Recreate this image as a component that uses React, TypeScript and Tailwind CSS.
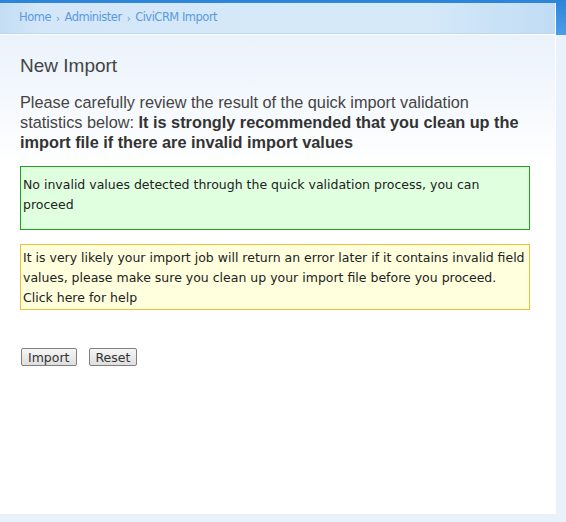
import React from "react";

export default function App() {
  return (
    <div className="w-[566px] h-[522px] overflow-hidden bg-[linear-gradient(to_bottom,#2c84d8_0px,#4b9de8_35px,#e9f1fa_35px,#e9f1fa_100%)] font-['DejaVu_Sans',sans-serif]">
      <div className="mt-[3px] w-[556px] h-[511px] border-r border-white flex flex-col bg-white">
        <div className="h-[31px] shrink-0 flex items-center pl-[19px] text-[11.5px] tracking-[-0.5px] text-[#5a9ae2] bg-[linear-gradient(to_right,#c3ddf4_0px,#d3e7f8_40px,#d6e9f9_420px,#c0dcf4_555px)] border-b border-[#bcd7ef]">
          <span>Home</span>
          <span className="mx-[5px] text-[10px]">›</span>
          <span>Administer</span>
          <span className="mx-[5px] text-[10px]">›</span>
          <span>CiviCRM Import</span>
        </div>
        <div className="flex-1 px-[20px] bg-[linear-gradient(to_bottom,#eaf2fb_0px,#ffffff_130px)] border-t border-white">
          <h1 className="mt-[20px] text-[19px] leading-[22px] text-[#444] font-['Liberation_Sans',Arial,sans-serif]">New Import</h1>
          <p className="mt-[15px] text-[16.3px] leading-[20px] text-[#444] font-['Liberation_Sans',Arial,sans-serif]">
            Please carefully review the result of the quick import validation statistics below:{" "}
            <b className="text-[#333]">It is strongly recommended that you clean up the import file if there are invalid import values</b>
          </p>
          <div className="mt-[14px] w-[510px] h-[64px] border border-[#1ca51c] bg-[#dfffdf] px-[2px] pt-[8px] text-[12.5px] leading-[20px] text-[#222]">
            No invalid values detected through the quick validation process, you can proceed
          </div>
          <div className="mt-[14px] w-[510px] border border-[#f0c030] bg-[#ffffdd] px-[2px] pt-[3px] pb-[1px] text-[12.5px] leading-[20px] text-[#222]">
            It is very likely your import job will return an error later if it contains invalid field values, please make sure you clean up your import file before you proceed.
            <br />
            Click here for help
          </div>
          <div className="mt-[38px] flex gap-[12px] ml-[1px]">
            <button className="h-[18px] px-[6px] rounded-[2px] border border-[#7f7f7f] bg-[linear-gradient(to_bottom,#f6f6f6,#dedede)] text-[12.5px] leading-[15px] text-[#333]">Import</button>
            <button className="h-[18px] px-[6px] rounded-[2px] border border-[#7f7f7f] bg-[linear-gradient(to_bottom,#f6f6f6,#dedede)] text-[12.5px] leading-[15px] text-[#333]">Reset</button>
          </div>
        </div>
      </div>
    </div>
  );
}
